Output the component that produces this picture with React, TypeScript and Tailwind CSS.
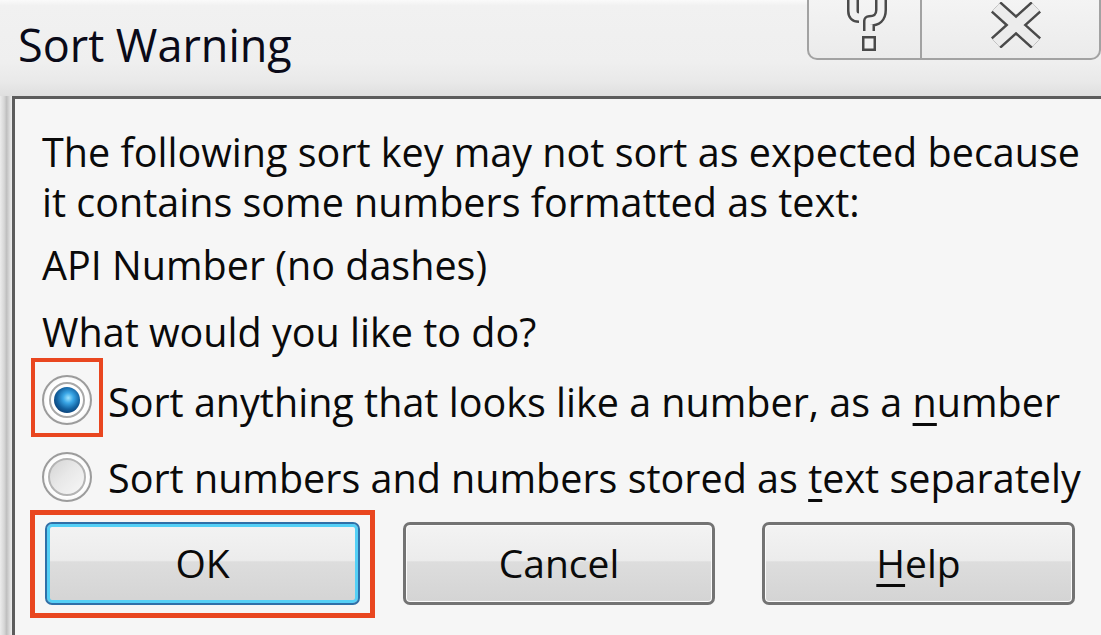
import type { ReactNode } from 'react'

const font = { fontFamily: '"Open Sans", "Noto Sans", sans-serif' }

const HelpGlyph = () => (
  <svg width="42" height="56" viewBox="0 0 42 56">
    <g fill="none" strokeLinejoin="round">
      <path d="M7 -10 L7 13 Q7 19 13 19 M35 -10 L35 12 Q35 23 23 23 L23 33" stroke="#4a4a4a" strokeWidth="12" />
      <rect x="16" y="38" width="14" height="15" fill="#4a4a4a" />
      <path d="M7 -10 L7 13 Q7 19 13 19 M35 -10 L35 12 Q35 23 23 23 L23 33" stroke="#f1f1f1" strokeWidth="7" />
      <rect x="18.5" y="40.5" width="9" height="10" fill="#f1f1f1" />
    </g>
  </svg>
)

const CloseGlyph = () => (
  <svg width="54" height="46" viewBox="0 0 54 46">
    <g fill="none">
      <path d="M7 5 L47 41 M47 5 L7 41" stroke="#4a4a4a" strokeWidth="15" />
      <path d="M7 5 L47 41 M47 5 L7 41" stroke="#ececec" strokeWidth="10" />
    </g>
  </svg>
)

const Radio = ({ checked }: { checked?: boolean }) => (
  <div className="w-[50px] h-[50px] rounded-full border-[2px] border-[#9c9c9c] bg-[radial-gradient(circle,#ffffff_60%,#e4e4e4_100%)] flex items-center justify-center shrink-0">
    {checked ? (
      <div className="w-[36px] h-[36px] rounded-full border-[2px] border-[#a9a9a9] bg-white flex items-center justify-center">
        <div className="w-[26px] h-[26px] rounded-full bg-[radial-gradient(circle_at_55%_42%,#9fe4ff_0%,#3aa6e6_25%,#13619f_55%,#0a3466_85%,#0b2c55_100%)]" />
      </div>
    ) : (
      <div className="w-[38px] h-[38px] rounded-full border-[2px] border-[#b4b4b4] bg-[linear-gradient(135deg,#d4d4d4_0%,#e8e8e8_45%,#f7f7f7_100%)]" />
    )}
  </div>
)

const DialogButton = ({ children, primary }: { children: ReactNode; primary?: boolean }) => (
  <div
    className={
      primary
        ? 'w-full h-[83px] rounded-[7px] border-[2px] border-[#2f70a8] shadow-[inset_0_0_0_3px_#55d0f6] bg-[linear-gradient(to_bottom,#f3f3f3_0%,#ececec_46%,#dddddd_48%,#d4d4d4_100%)] flex items-center justify-center'
        : 'w-full h-[83px] rounded-[7px] border-[3px] border-[#737373] shadow-[inset_0_0_0_1px_#fbfbfb] bg-[linear-gradient(to_bottom,#f3f3f3_0%,#ececec_46%,#dddddd_48%,#d4d4d4_100%)] flex items-center justify-center'
    }
  >
    <span className="text-[39px] leading-none text-[#0a0a0a] pb-[2px]">{children}</span>
  </div>
)

export default function App() {
  return (
    <div className="w-[1101px] h-[635px] overflow-hidden flex flex-col bg-[#f0f0f0]" style={font}>
      {/* caption */}
      <div className="h-[96px] shrink-0 flex justify-between items-start pl-[18px] bg-[linear-gradient(to_bottom,#fafafa_0%,#f1f1f1_6%,#efefef_65%,#e9e9e9_85%,#dfdfdf_100%)]">
        <div className="pt-[22px] text-[45px] leading-[45px] text-[#0a0a18]">Sort Warning</div>
        <div className="flex h-[62px] w-[294px] -mt-[2px] rounded-b-[10px] border-[2px] border-t-0 border-[#a2a2a2] bg-[linear-gradient(to_bottom,#f4f4f4,#ebebeb)] overflow-hidden">
          <div className="w-[113px] h-full border-r-[2px] border-[#a2a2a2] flex justify-center pl-[4px]">
            <HelpGlyph />
          </div>
          <div className="flex-1 flex justify-center pt-[4px] pl-[10px]">
            <CloseGlyph />
          </div>
        </div>
      </div>

      <div className="flex-1 flex">
        {/* window frame edge */}
        <div className="w-[12px] bg-[linear-gradient(to_right,#ececec_0%,#d6d6d6_35%,#bfbfbf_55%,#dadada_80%,#eeeeee_100%)]" />

        <div className="flex-1 border-l-[3px] border-t-[3px] border-[#5c5c5c] bg-[#f6f6f6] pl-[27px] pt-[28px] text-[39.5px] leading-[50px] text-[#0a0a0a] whitespace-nowrap">
          <p>
            The following sort key may not sort as expected because
            <br />
            it contains some numbers formatted as text:
          </p>
          <p className="mt-[13px]">API Number (no dashes)</p>
          <p className="mt-[17px]">What would you like to do?</p>

          <div className="mt-[20px] h-[50px] flex items-center">
            <div className="relative mb-[4px]">
              <Radio checked />
              <div className="absolute -left-[11px] -top-[17px] w-[72px] h-[79px] border-[4px] border-[#e9461f]" />
            </div>
            <span className="ml-[16px]">
              Sort anything that looks like a number, as a <u className="underline-offset-[6px]">n</u>umber
            </span>
          </div>

          <div className="mt-[26px] h-[50px] flex items-center">
            <div className="mb-[2px]">
              <Radio />
            </div>
            <span className="ml-[16px]">
              Sort numbers and numbers stored as <u className="underline-offset-[6px]">t</u>ext separately
            </span>
          </div>

          <div className="mt-[19px] ml-[3px] flex">
            <div className="relative w-[315px]">
              <DialogButton primary>OK</DialogButton>
              <div className="absolute -left-[15px] -top-[12px] -right-[15px] -bottom-[13px] border-[5px] border-[#e9461f]" />
            </div>
            <div className="ml-[43px] w-[312px]">
              <DialogButton>Cancel</DialogButton>
            </div>
            <div className="ml-[47px] w-[313px]">
              <DialogButton>
                <u className="underline-offset-[6px]">H</u>elp
              </DialogButton>
            </div>
          </div>
        </div>
      </div>
    </div>
  )
}
